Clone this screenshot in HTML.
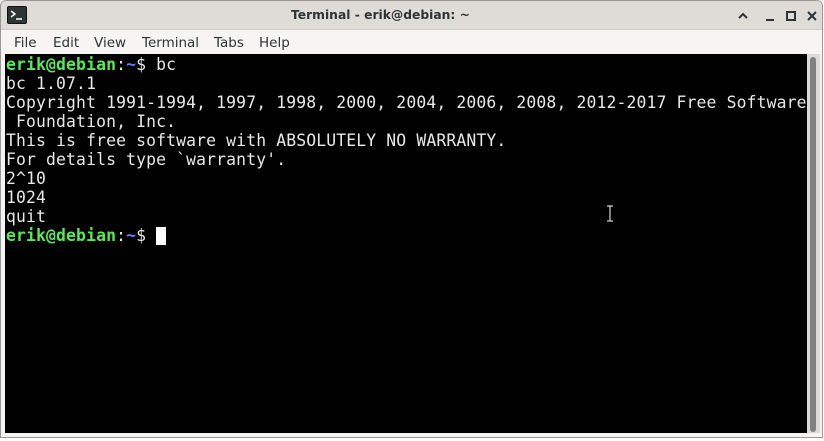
<!DOCTYPE html>
<html><head><meta charset="utf-8"><style>
*{margin:0;padding:0;box-sizing:border-box}
body{width:824px;height:441px;background:#fff;position:relative;overflow:hidden;font-family:"DejaVu Sans","Liberation Sans",sans-serif}
.win{position:absolute;left:0;top:0;width:823px;height:438px;border:1px solid #9a9896;border-radius:6px 6px 0 0;background:#f5f4f2;overflow:hidden}
.title{position:absolute;left:0;top:0;right:0;height:29px;background:#dfdcd8;border-bottom:1px solid #cfccc8}
.title .t{position:absolute;left:290px;top:7px;font-size:12.3px;font-weight:bold;color:#2e3436}
.icon{position:absolute;left:6px;top:5px;width:20px;height:18px;background:#2e3436;border:1px solid #111;border-radius:2px}
.menu{position:absolute;left:0;right:0;top:29px;height:25px;background:#f6f5f4;font-size:13.5px;color:#2e3436}
.menu span{position:absolute;top:5px}
.term{position:absolute;left:5px;top:54px;width:802px;height:379px;background:#000;font-family:"DejaVu Sans Mono","Liberation Mono",monospace;font-size:16.4px;letter-spacing:0.14px;line-height:19px;color:#e8e8e8;white-space:pre;padding:1px 0 0 1px}
.g{color:#5ae85a;font-weight:bold}.b{color:#6a7ff5;font-weight:bold}
.sb{position:absolute;left:807px;top:54px;width:13px;height:379px;background:#dcdad6}
.th{position:absolute;left:810px;top:57px;width:6px;height:375px;background:#7f8281;border-radius:3px}
.cur{display:inline-block;width:10px;height:18px;background:#fff;vertical-align:-4px}
</style></head><body>
<div class="win">
<div class="title"><div class="icon"><svg width="18" height="16" viewBox="0 0 18 16"><path d="M3 4l4 3-4 3" stroke="#fff" stroke-width="1.5" fill="none"/><path d="M8 12h6" stroke="#fff" stroke-width="1.5"/></svg></div>
<div class="t">Terminal - erik@debian: ~</div>
<svg style="position:absolute;left:730px;top:8px" width="90" height="14" viewBox="0 0 90 14">
<path d="M8 9l4-4 4 4" stroke="#2e3436" stroke-width="2" fill="none"/>
<path d="M35 11h8" stroke="#2e3436" stroke-width="2"/>
<rect x="56" y="3" width="8" height="8" stroke="#2e3436" stroke-width="2" fill="none"/>
<path d="M77 3l8 8M85 3l-8 8" stroke="#2e3436" stroke-width="2"/>
</svg></div>
<div class="menu"><span style="left:13px">File</span><span style="left:52px">Edit</span><span style="left:93px">View</span><span style="left:141px">Terminal</span><span style="left:213px">Tabs</span><span style="left:258px">Help</span></div>
</div>
<div class="term"><span class="g">erik@debian</span>:<span class="b">~</span>$ bc
bc 1.07.1
Copyright 1991-1994, 1997, 1998, 2000, 2004, 2006, 2008, 2012-2017 Free Software
 Foundation, Inc.
This is free software with ABSOLUTELY NO WARRANTY.
For details type `warranty'.
2^10
1024
quit
<span class="g">erik@debian</span>:<span class="b">~</span>$ <span class="cur"></span></div>
<div class="sb"></div><div class="th"></div>
<svg style="position:absolute;left:605px;top:205px" width="10" height="18" viewBox="0 0 10 18"><path d="M2 1h6M2 16h6M5 1v15" stroke="#000" stroke-width="3"/><path d="M2 1h6M2 16h6M5 1v15" stroke="#fff" stroke-width="1"/></svg>
</body></html>
